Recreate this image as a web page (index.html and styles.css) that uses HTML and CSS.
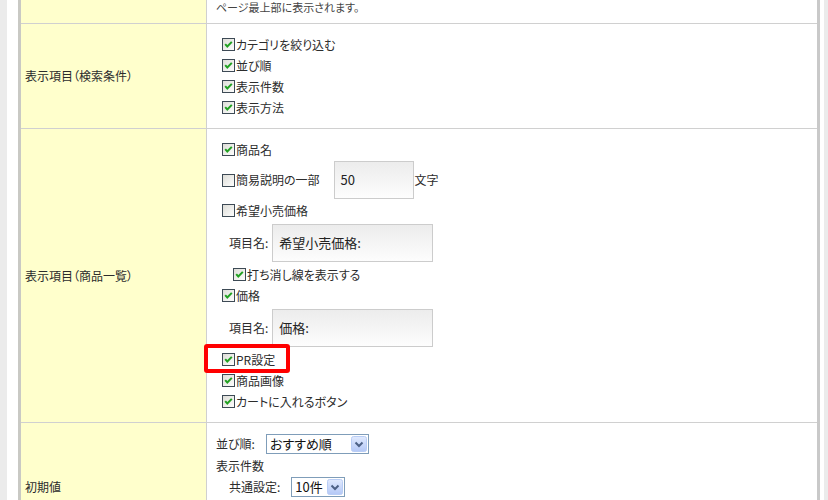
FILE: index.html
```html
<!DOCTYPE html>
<html lang="ja">
<head>
<meta charset="utf-8">
<title>表示設定</title>
<link rel="stylesheet" href="styles.css">
</head>
<body>
<svg class="defs" width="0" height="0" aria-hidden="true">
  <defs>
    <linearGradient id="cbg" x1="0" y1="0" x2="1" y2="1">
      <stop offset="0" stop-color="#dcdcd6"/>
      <stop offset="1" stop-color="#ffffff"/>
    </linearGradient>
    <linearGradient id="btg" x1="0" y1="0" x2="0" y2="1">
      <stop offset="0" stop-color="#e1eafe"/>
      <stop offset="1" stop-color="#b4c8f6"/>
    </linearGradient>
    <symbol id="cboff" viewBox="0 0 13 13">
      <rect x="0.5" y="0.5" width="12" height="12" fill="url(#cbg)" stroke="#3d4a55"/>
    </symbol>
    <symbol id="cbon" viewBox="0 0 13 13">
      <rect x="0.5" y="0.5" width="12" height="12" fill="url(#cbg)" stroke="#3d4a55"/>
      <path d="M3.2 6.2 L5.3 8.5 L9.8 3.9" fill="none" stroke="#21a121" stroke-width="2"/>
    </symbol>
    <symbol id="arr" viewBox="0 0 16 16">
      <rect x="0.5" y="0.5" width="15" height="15" rx="2" fill="url(#btg)" stroke="#b9cdf5"/>
      <path d="M4.5 6.5 L8 10 L11.5 6.5" fill="none" stroke="#4d6185" stroke-width="2"/>
    </symbol>
  </defs>
</svg>
<div class="frame">
  <div class="tbl">
    <div class="row">
      <div class="th"></div>
      <div class="td td-note"><div class="note">ページ最上部に表示されます。</div></div>
    </div>

    <div class="row">
      <div class="th">表示項目（検索条件）</div>
      <div class="td">
        <div class="line"><svg class="cb"><use href="#cbon"/></svg>カテゴリを絞り込む</div>
        <div class="line"><svg class="cb"><use href="#cbon"/></svg>並び順</div>
        <div class="line"><svg class="cb"><use href="#cbon"/></svg>表示件数</div>
        <div class="line"><svg class="cb"><use href="#cbon"/></svg>表示方法</div>
      </div>
    </div>

    <div class="row">
      <div class="th">表示項目（商品一覧）</div>
      <div class="td">
        <div class="line"><svg class="cb"><use href="#cbon"/></svg>商品名</div>
        <div class="line line-field"><svg class="cb"><use href="#cboff"/></svg>簡易説明の一部<span class="field field-short">50</span>文字</div>
        <div class="line"><svg class="cb"><use href="#cboff"/></svg>希望小売価格</div>
        <div class="line line-name"><span class="lbl">項目名:</span><span class="field">希望小売価格:</span></div>
        <div class="line line-sub"><svg class="cb"><use href="#cbon"/></svg>打ち消し線を表示する</div>
        <div class="line"><svg class="cb"><use href="#cbon"/></svg>価格</div>
        <div class="line line-name"><span class="lbl">項目名:</span><span class="field">価格:</span></div>
        <div class="line line-pr"><svg class="cb"><use href="#cbon"/></svg>PR設定<span class="highlight"></span></div>
        <div class="line"><svg class="cb"><use href="#cbon"/></svg>商品画像</div>
        <div class="line"><svg class="cb"><use href="#cbon"/></svg>カートに入れるボタン</div>
      </div>
    </div>

    <div class="row">
      <div class="th">初期値</div>
      <div class="td td-init">
        <div class="line line-sel"><span class="sel-lbl">並び順:</span><span class="sel sel-sort"><span class="sel-text">おすすめ順</span><svg class="sel-btn"><use href="#arr"/></svg></span></div>
        <div class="line">表示件数</div>
        <div class="line line-sel line-indent"><span class="sel-lbl">共通設定:</span><span class="sel sel-count"><span class="sel-text">10件</span><svg class="sel-btn"><use href="#arr"/></svg></span></div>
      </div>
    </div>
  </div>
</div>
</body>
</html>
```

FILE: styles.css
```css
* {
  box-sizing: border-box;
}

body {
  margin: 0;
  background: #fff;
  font-family: "Noto Sans CJK JP", "Noto Sans", sans-serif;
  font-size: 12px;
  color: #2c2c2c;
  font-feature-settings: "palt";
}

.defs {
  position: absolute;
  width: 0;
  height: 0;
  overflow: hidden;
}

.frame {
  min-height: 500px;
  border-left: 7px solid #ebebeb;
  border-right: 4px solid #ebebeb;
  padding: 0 4px 0 11px;
  background: #fff;
}

.tbl {
  border-left: 3px solid #c9c9c4;
  border-right: 3px solid #c9c9c9;
}

.row {
  display: grid;
  grid-template-columns: 186px 1fr;
  border-bottom: 1px solid #d0d0d0;
}

.th {
  display: flex;
  align-items: center;
  padding-left: 4px;
  background: #ffffcc;
  border-right: 1px solid #d0d0d0;
  line-height: 16px;
}

.td {
  padding: 10px 0 10px 9px;
}

.td-note {
  padding: 1px 0 9px 9px;
}

.note {
  font-size: 11px;
  line-height: 13px;
  color: #444;
}

.line {
  display: flex;
  align-items: center;
  height: 21px;
  line-height: 16px;
  white-space: nowrap;
}

.cb {
  width: 13px;
  height: 13px;
  flex: none;
  margin: 0 1px 0 6px;
}

.line-field {
  height: 40px;
}

.line-name {
  height: 43px;
  padding-left: 13px;
}

.line-sub .cb {
  margin-left: 17px;
}

.line-pr {
  position: relative;
}

.highlight {
  position: absolute;
  left: -12px;
  top: -5px;
  width: 86px;
  height: 29px;
  border: 4px solid #ff0000;
  border-radius: 3px;
}

.lbl {
  margin-right: 4px;
}

.field {
  display: flex;
  align-items: center;
  width: 161px;
  height: 38px;
  padding-left: 6px;
  border: 1px solid #cccccc;
  background: linear-gradient(#ececec, #fdfdfd);
  font-size: 13px;
  color: #222;
}

.field-short {
  width: 80px;
  margin: 0 1px 0 14px;
}

.td-init {
  padding-bottom: 53px;
}

.line-sel {
  height: 22px;
}

.line-indent {
  padding-left: 13px;
}

.sel-lbl {
  margin-right: 11px;
}

.sel {
  display: flex;
  align-items: center;
  height: 20px;
  padding-left: 3px;
  border: 1px solid #7f9db9;
  background: #fff;
  font-size: 13px;
  color: #111;
}

.sel-sort {
  width: 103px;
}

.sel-count {
  width: 54px;
}

.sel-text {
  flex: 1;
}

.sel-btn {
  width: 16px;
  height: 16px;
  flex: none;
  margin-right: 1px;
}
```
